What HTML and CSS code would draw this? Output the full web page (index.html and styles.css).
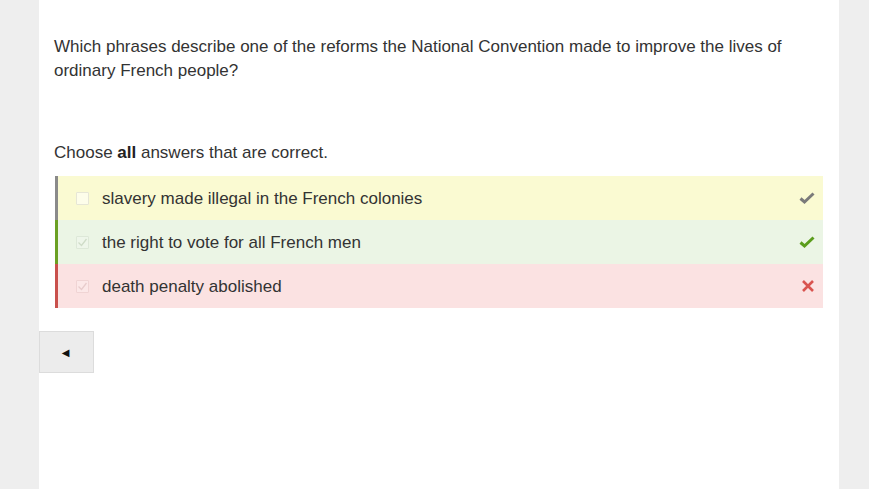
FILE: index.html
```html
<!DOCTYPE html>
<html>
<head>
<meta charset="utf-8">
<link rel="stylesheet" href="styles.css">
</head>
<body>
<div class="page">
  <div class="panel">
    <p class="question">Which phrases describe one of the reforms the National Convention made to improve the lives of ordinary French people?</p>
    <p class="instruction">Choose <b>all</b> answers that are correct.</p>
    <div class="answers">
      <div class="row row-missed">
        <span class="box"></span>
        <span class="label">slavery made illegal in the French colonies</span>
        <svg class="mark" width="16" height="14" viewBox="0 0 16 14"><path d="M1.5 7.5 L5.5 11 L14.5 2.5" fill="none" stroke="#7a7a7a" stroke-width="3"/></svg>
      </div>
      <div class="row row-correct">
        <span class="box checked"><svg width="11" height="11" viewBox="0 0 11 11"><path d="M1.5 5.5 L4.5 8.5 L9.5 2" fill="none" stroke="#cfdcc8" stroke-width="1.3"/></svg></span>
        <span class="label">the right to vote for all French men</span>
        <svg class="mark" width="16" height="14" viewBox="0 0 16 14"><path d="M1.5 7.5 L5.5 11 L14.5 2.5" fill="none" stroke="#5b9d1c" stroke-width="3"/></svg>
      </div>
      <div class="row row-wrong">
        <span class="box checked"><svg width="11" height="11" viewBox="0 0 11 11"><path d="M1.5 5.5 L4.5 8.5 L9.5 2" fill="none" stroke="#e8cccc" stroke-width="1.3"/></svg></span>
        <span class="label">death penalty abolished</span>
        <svg class="mark" width="14" height="14" viewBox="0 0 14 14"><path d="M2 2 L12 12 M12 2 L2 12" fill="none" stroke="#d9534f" stroke-width="2.6"/></svg>
      </div>
    </div>
    <div class="nav">
      <button class="back" type="button">&#9664;</button>
    </div>
  </div>
</div>
</body>
</html>
```

FILE: styles.css
```css
html, body {
  margin: 0;
  padding: 0;
  height: 100%;
  background: #eeeeee;
  font-family: "Liberation Sans", Arial, sans-serif;
  color: #333333;
}
.page {
  height: 489px;
  overflow: hidden;
  padding-left: 39px;
}
.panel {
  width: 800px;
  height: 489px;
  background: #ffffff;
}
.question {
  margin: 0;
  padding: 35px 0 0 15px;
  width: 760px;
  font-size: 17px;
  line-height: 24px;
}
.instruction {
  margin: 0;
  padding: 58px 0 0 15px;
  font-size: 17px;
  line-height: 24px;
}
.instruction b {
  font-weight: bold;
  color: #222;
}
.answers {
  margin: 11px 16px 0 16px;
}
.row {
  display: flex;
  align-items: center;
  height: 44px;
  border-left: 3px solid #888888;
  box-sizing: border-box;
  font-size: 17px;
  color: #333;
}
.row-missed { background: #fafad2; border-left-color: #8a8a8a; }
.row-correct { background: #ebf5e5; border-left-color: #6ba023; }
.row-wrong { background: #fbe2e2; border-left-color: #c9504c; }
.box {
  width: 11px;
  height: 11px;
  margin-left: 18px;
  border: 1px solid #e6e6d6;
  background: #fdfdea;
  border-radius: 1px;
  display: flex;
  align-items: center;
  justify-content: center;
}
.row-correct .box { border-color: #dde8d8; background: #eef6ea; }
.row-wrong .box { border-color: #f0d4d4; background: #fce8e8; }
.label {
  margin-left: 13px;
  padding-top: 2px;
  flex: 1;
}
.mark {
  margin-right: 8px;
}
.nav {
  padding-top: 23px;
}
.back {
  display: flex;
  align-items: center;
  justify-content: center;
  width: 55px;
  height: 42px;
  margin: 0;
  padding: 0 2px 0 0;
  background: #ececec;
  border: 1px solid #dcdcdc;
  font-size: 10px;
  color: #111;
  font-family: "DejaVu Sans", sans-serif;
}
```
